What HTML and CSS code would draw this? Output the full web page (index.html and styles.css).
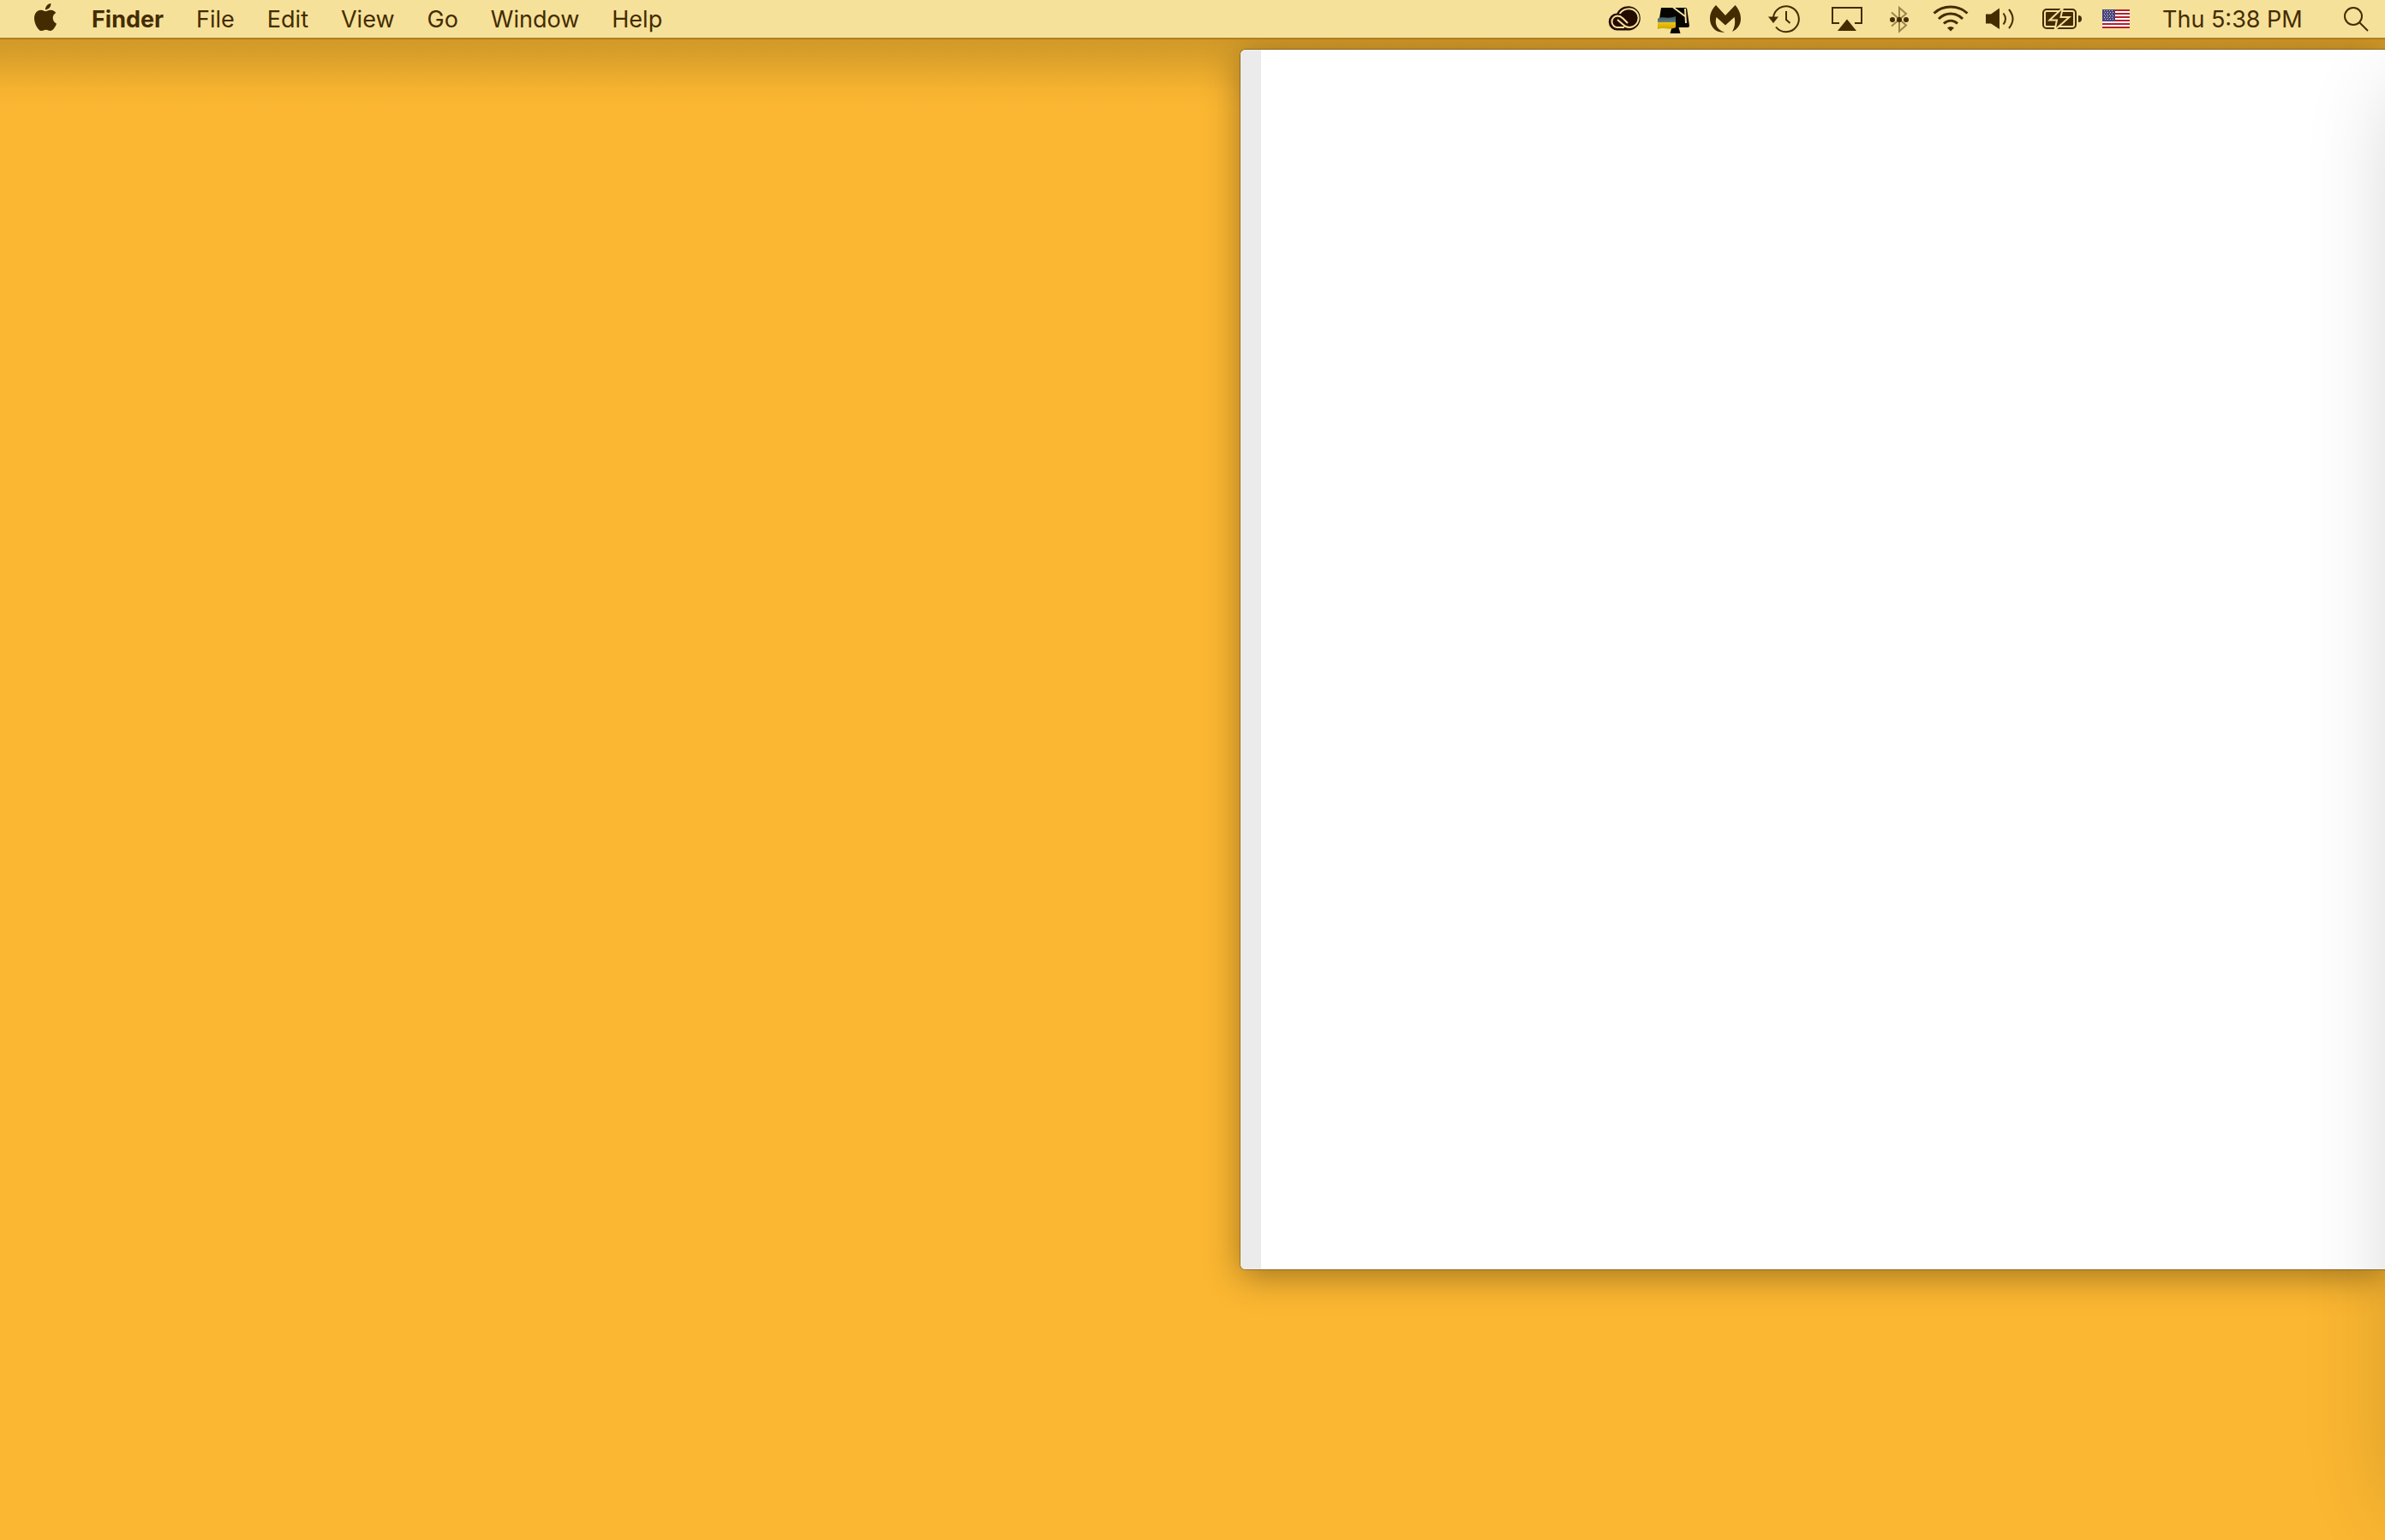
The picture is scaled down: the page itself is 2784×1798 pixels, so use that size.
FILE: index.html
```html
<!DOCTYPE html>
<html lang="en">
<head>
<meta charset="utf-8">
<title>Finder</title>
<link rel="stylesheet" href="styles.css">
</head>
<body>
<header class="menubar">
  <nav class="menus" aria-label="Application menus">
    <button class="apple" aria-label="Apple menu">
      <svg width="32" height="32" viewBox="0 0 24 24"><path d="M12.152 6.896c-.948 0-2.415-1.078-3.96-1.04-2.04.027-3.91 1.183-4.961 3.014-2.117 3.675-.546 9.103 1.519 12.09 1.013 1.454 2.208 3.09 3.792 3.039 1.52-.065 2.09-.987 3.935-.987 1.831 0 2.35.987 3.96.948 1.637-.026 2.676-1.48 3.676-2.948 1.156-1.688 1.636-3.325 1.662-3.415-.039-.013-3.182-1.221-3.22-4.857-.026-3.04 2.48-4.494 2.597-4.559-1.429-2.09-3.623-2.324-4.39-2.376-2-.156-3.675 1.09-4.61 1.09zM15.53 3.83c.843-1.012 1.4-2.427 1.245-3.83-1.207.052-2.662.805-3.532 1.818-.78.896-1.454 2.338-1.273 3.714 1.338.104 2.715-.688 3.559-1.701"/></svg>
    </button>
    <button class="menu app-name">Finder</button>
    <button class="menu">File</button>
    <button class="menu">Edit</button>
    <button class="menu">View</button>
    <button class="menu">Go</button>
    <button class="menu">Window</button>
    <button class="menu">Help</button>
  </nav>
  <div class="status">
    <button aria-label="Creative Cloud">
      <svg width="58" height="44">
        <path class="cloud" d="M20 35.500A10 10 0 0 1 19.500 15.500C21.500 10.500 27 7 33.500 7.200A14.200 14.200 0 0 1 34 35.500Z"/>
        <path class="cut" d="M28 32H20.500A6.500 6.500 0 0 1 20 18.500C23 18.500 24.500 19.500 26.500 21.500L32 27M22.500 16C25.500 12 29 10.200 33.500 10.200A10.800 10.800 0 0 1 34 32C31 32 29 31 27 29L20 23"/>
      </svg>
    </button>
    <button aria-label="CleanMyMac">
      <svg width="58" height="44">
        <defs><linearGradient id="ribbon" x1="0" y1="0" x2="0" y2="1"><stop offset="0" stop-color="#3d5960"/><stop offset=".46" stop-color="#648083"/><stop offset=".5" stop-color="#ebc511"/><stop offset="1" stop-color="#d0a300"/></linearGradient></defs>
        <path fill="#070500" d="M13 9H41.500Q43 9 43.200 10.500L46 30Q46 32 44 32H33.500L35.500 39H23.500L25.500 32H12L10 28Z"/>
        <path fill="none" stroke="#f6e19a" stroke-width="2" d="M27 8.500L41 19M41 10L42 27"/>
        <path fill="url(#ribbon)" d="M9 22C14 18 21 23 30 19V32C22 36 15 31 9 34Z"/>
      </svg>
    </button>
    <button aria-label="Malwarebytes">
      <svg width="64" height="44"><path d="M19 6L30 18L41.500 6C45 10 48 15 48 22C48 29 44 34 38 37C41 32 42 26 40.500 20L30 29.500L19.500 20C17 29 21 35 29 37.500C19 39 12 31 12 22C12 15 15 10 19 6Z"/></svg>
    </button>
    <button aria-label="Time Machine">
      <svg width="72" height="44"><path class="line" d="M22 20A15 15 0 1 1 25 31.500M37 13V23L41.500 27"/><path d="M16 19.500H28L22 27Z"/></svg>
    </button>
    <button aria-label="AirPlay">
      <svg width="70" height="44"><path class="line" d="M27 27H19V9H53V27H45"/><path d="M36 22.500L47 36H25Z"/></svg>
    </button>
    <button aria-label="Bluetooth">
      <svg width="52" height="44"><path class="line faint" d="M18 14.500L35 29.500L27 36.500V9L35 16L18 30.500"/><circle cx="19" cy="23" r="3"/><circle cx="27" cy="23" r="3"/><circle cx="35" cy="23" r="3"/></svg>
    </button>
    <button aria-label="Wi-Fi">
      <svg width="66" height="44"><path class="line wave" d="M15.500 15.500C26 5.500 44 5.500 54.500 15.500M21 22C29 14 41 14 49 22M27 27.500C32 23 38 23 43 27.500"/><path d="M31 32.500Q35 29.500 39 32.500L35 36.500Z"/></svg>
    </button>
    <button aria-label="Volume">
      <svg width="60" height="44"><path d="M10 16.500H16L26 9.500V34L16 27.500H10Z"/><path class="line" d="M30.500 15.500Q35.500 22 30.500 28.500M37 11Q46 22 37 33"/></svg>
    </button>
    <button aria-label="Battery, charging">
      <svg width="74" height="44">
        <rect class="line" x="17" y="11" width="38" height="22" rx="4"/><rect x="20" y="14" width="32" height="16" rx="1"/><path d="M58 18Q62 18 62 22T58 26Z"/>
        <path class="bolt" d="M40 9L24.500 23.500H33L30.500 35L47.500 20H37.500Z"/>
      </svg>
    </button>
    <button aria-label="U.S. keyboard layout">
      <svg width="62" height="44">
        <path fill="#fff" d="M12 11H44V33H12Z"/>
        <path fill="none" stroke="#b3202e" stroke-width="2" d="M12 12H44M12 16H44M12 20H44M12 24H44M12 28H44M12 32H44"/>
        <path fill="#48447a" d="M12 11H27V25H12Z"/>
        <path fill="none" stroke="#d4d1df" stroke-dasharray="1 2" d="M14 12.500H26M15 14.500H26M14 16.500H26M15 18.500H26M14 20.500H26M15 22.500H26"/>
      </svg>
    </button>
    <button class="clock">Thu 5:38 PM</button>
    <button aria-label="Spotlight search">
      <svg width="70" height="44"><circle class="line" cx="33" cy="19" r="10"/><path class="line" d="M40.500 26.500L50 36"/></svg>
    </button>
  </div>
</header>
<main class="desktop">
  <section class="window" aria-label="Window"><div class="sidebar"></div><div class="content"></div></section>
  <div class="offscreen-window"></div>
</main>
</body>
</html>
```
FILE: styles.css
```css
* {
  box-sizing: border-box;
}

body {
  margin: 0;
  min-height: 100vh;
  display: flex;
  flex-direction: column;
  background: #fbb731;
  color: #442c00;
  font: 27px/32px Inter, "Liberation Sans", sans-serif;
}

button {
  display: block;
  margin: 0;
  padding: 0;
  border: 0;
  background: none;
  color: inherit;
  font: inherit;
}

svg {
  display: block;
  fill: currentColor;
}

.menubar {
  display: flex;
  justify-content: space-between;
  height: 46px;
  background: #f6e19a;
  border-bottom: 2px solid #b17d21;
}

.menus,
.status {
  display: flex;
  align-items: center;
}

.menus {
  gap: 38px;
  padding-left: 37px;
}

.apple {
  padding-bottom: 4px;
}

.menu,
.clock {
  padding-top: 2px;
}

.app-name {
  font-weight: 700;
}

.clock {
  width: 210px;
  padding-left: 20px;
  text-align: left;
}

.line {
  fill: none;
  stroke: currentColor;
  stroke-width: 2;
}

.wave {
  stroke-width: 3;
}

.faint {
  opacity: .5;
}

.cloud {
  fill: #240b00;
}

.cut {
  fill: none;
  stroke: #f6e19a;
  stroke-width: 2;
}

.bolt {
  stroke: #f6e19a;
  stroke-width: 2;
}

.desktop {
  position: relative;
  flex: 1;
  overflow: hidden;
  background: linear-gradient(#d19928, #daa02a 20px, #e9aa2d 40px, #f6b330 60px, #fbb731 80px);
}

.window {
  position: absolute;
  top: 12px;
  right: 0;
  bottom: 316px;
  left: 52%;
  display: flex;
  border-radius: 6px 0 0 6px;
  background: #fff;
  box-shadow: 0 0 0 1px rgba(0, 0, 0, .25), 0 8px 40px rgba(0, 0, 0, .36);
}

.sidebar {
  width: 24px;
  border-radius: 6px 0 0 6px;
  background: #ebebeb;
}

.content {
  flex: 1;
}

.offscreen-window {
  position: absolute;
  top: 60px;
  bottom: 36px;
  left: calc(100% + 16px);
  width: 400px;
  box-shadow: 0 0 100px rgba(0, 0, 0, .19);
}
```
